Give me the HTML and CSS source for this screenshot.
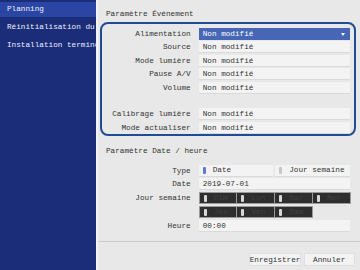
FILE: index.html
```html
<!DOCTYPE html>
<html lang="fr">
<head>
    <meta charset="UTF-8">
    <meta name="viewport" content="width=device-width, initial-scale=1.0">
    <title>Planning</title>
    <link rel="stylesheet" href="styles.css">
</head>
<body>
    <!-- Menu latéral -->
    <nav class="sidebar">
        <div class="nav-item active">Planning</div>
        <div class="nav-item">Réinitialisation du planning</div>
        <div class="nav-item">Installation terminée</div>
    </nav>
    <!-- Zone principale -->
    <main class="main">
        <div class="content">
            <div class="section-title">Paramètre Événement</div>
            <div class="event-box">
                <div class="form">
                    <div class="label">Alimentation</div>
                    <div class="field selected">Non modifié<span class="arrow"></span></div>
                    <div class="label">Source</div>
                    <div class="field">Non modifié</div>
                    <div class="label">Mode lumière</div>
                    <div class="field">Non modifié</div>
                    <div class="label">Pause A/V</div>
                    <div class="field">Non modifié</div>
                    <div class="label">Volume</div>
                    <div class="field">Non modifié</div>
                    <div class="spacer"></div>
                    <div class="label">Calibrage lumière</div>
                    <div class="field">Non modifié</div>
                    <div class="label">Mode actualiser</div>
                    <div class="field">Non modifié</div>
                </div>
            </div>

            <div class="section-title second">Paramètre Date / heure</div>
            <div class="form date-form">
                <div class="label">Type</div>
                <div class="toggle-group">
                    <div class="field toggle"><span class="mark on"></span>Date</div>
                    <div class="field toggle"><span class="mark"></span>Jour semaine</div>
                </div>
                <div class="label">Date</div>
                <div class="field">2019-07-01</div>
                <div class="label top">Jour semaine</div>
                <div class="days">
                    <div class="day"><span class="mark"></span>Dim</div>
                    <div class="day"><span class="mark"></span>Lun</div>
                    <div class="day"><span class="mark"></span>Mar</div>
                    <div class="day"><span class="mark"></span>Mer</div>
                    <div class="day"><span class="mark"></span>Jeu</div>
                    <div class="day"><span class="mark"></span>Ven</div>
                    <div class="day"><span class="mark"></span>Sam</div>
                </div>
                <div class="label">Heure</div>
                <div class="field">00:00</div>
            </div>
        </div>
        <!-- Boutons -->
        <div class="footer">
            <div class="button save">Enregistrer</div>
            <div class="button">Annuler</div>
        </div>
    </main>
</body>
</html>
```

FILE: styles.css
```css
/* Styles généraux */
body {
    margin: 0;
    padding: 0;
    width: 360px;
    height: 270px;
    display: flex;
    overflow: hidden;
    font-family: "Liberation Mono", "DejaVu Sans Mono", monospace;
    font-size: 7.7px;
    color: #333;
    background-color: #e8e8e8;
}
/* Menu latéral */
.sidebar {
    width: 96px;
    flex-shrink: 0;
    padding-top: 2px;
    background-color: #1b2c78;
    overflow: hidden;
}
.nav-item {
    height: 15px;
    line-height: 15px;
    margin-bottom: 3px;
    padding-left: 7px;
    color: #eef0ff;
    white-space: nowrap;
    overflow: hidden;
}
.nav-item.active {
    background-color: #2b46a2;
}
/* Zone principale */
.main {
    flex: 1;
    display: flex;
    flex-direction: column;
    border-left: 2px solid #f3f3f3;
    background-color: #e8e8e8;
}
.content {
    flex: 1;
}
.section-title {
    height: 12px;
    line-height: 12px;
    margin-top: 8px;
    padding-left: 8px;
}
.section-title.second {
    margin-top: 8.7px;
}
/* Cadre bleu arrondi */
.event-box {
    margin: 2px 5px 0 1.7px;
    padding: 4px 4px 0.5px 0;
    border: 2px solid #1f4c96;
    border-radius: 8px;
}
.form {
    display: grid;
    grid-template-columns: 89px 151px;
    column-gap: 8px;
    row-gap: 1.4px;
}
.date-form {
    margin-top: 7.6px;
    padding-left: 3.7px;
    row-gap: 1.7px;
}
.label {
    height: 12px;
    line-height: 12px;
    text-align: right;
    white-space: nowrap;
}
.label.top {
    align-self: start;
}
.field {
    position: relative;
    height: 12px;
    line-height: 12px;
    padding-left: 4px;
    box-sizing: border-box;
    background-color: #f3f3f3;
    border-bottom: 1px solid #dadada;
    white-space: nowrap;
}
.field.selected {
    background-color: #4766b6;
    color: #fff;
    border-bottom-color: #4766b6;
}
.arrow {
    position: absolute;
    right: 5px;
    top: 4.5px;
    border-left: 2.5px solid transparent;
    border-right: 2.5px solid transparent;
    border-top: 3px solid #fff;
}
.spacer {
    grid-column: 1 / 3;
    height: 12px;
}
/* Type : Date / Jour semaine */
.toggle-group {
    display: grid;
    grid-template-columns: 1fr 1fr;
    column-gap: 2px;
}
.toggle {
    display: flex;
    align-items: center;
    padding-left: 0;
}
.mark {
    display: inline-block;
    width: 3px;
    height: 7px;
    margin: 0 7px 0 4px;
    background-color: #c6c6c6;
    border-radius: 1px;
}
.mark.on {
    background-color: #5a7bd0;
}
/* Jours de la semaine */
.days {
    display: grid;
    grid-template-columns: repeat(4, 1fr);
    row-gap: 1.7px;
}
.day {
    display: flex;
    align-items: center;
    height: 12.3px;
    box-sizing: border-box;
    background-color: #2e2e2e;
    border: 1px solid #9a9a9a;
    margin-right: -1px;
    color: #414141;
}
.day .mark {
    background-color: #d8d8d8;
    margin-left: 4px;
}
/* Barre de boutons */
.footer {
    height: 29.5px;
    box-sizing: border-box;
    border-top: 1px solid #cbcbcb;
    display: flex;
    justify-content: flex-end;
    align-items: flex-start;
    gap: 3px;
    padding: 11.8px 6px 0 0;
}
.button {
    height: 12.4px;
    line-height: 12.4px;
    padding: 0 4px;
    background-color: #f3f3f3;
    border: 1px solid #e0e0e0;
    box-sizing: border-box;
    text-align: center;
}
.button.save {
    width: 52px;
    padding: 0;
}
.button:not(.save) {
    width: 51px;
}
```
